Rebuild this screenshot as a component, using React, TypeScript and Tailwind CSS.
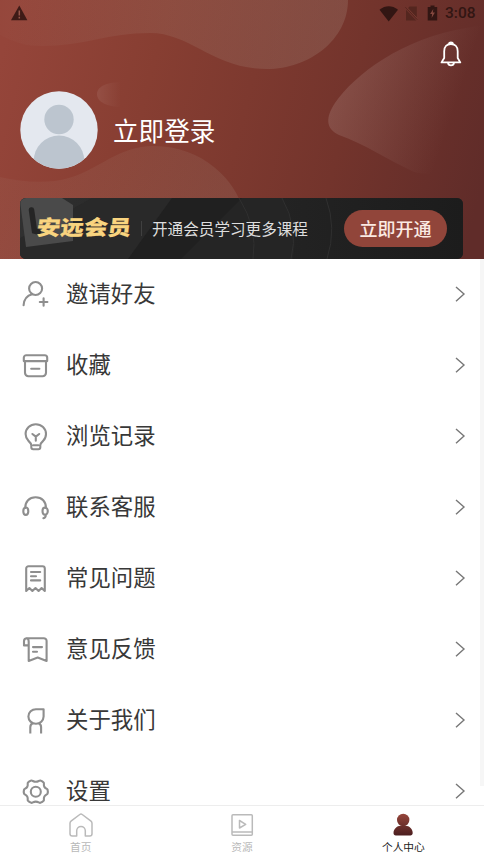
import React from 'react';

const Stroke: React.FC<{ children: React.ReactNode }> = ({ children }) => (
  <svg
    width="30"
    height="30"
    viewBox="0 0 30 30"
    fill="none"
    stroke="#8e8e8e"
    strokeWidth="2.1"
    strokeLinecap="round"
    strokeLinejoin="round"
    className="flex-shrink-0"
  >
    {children}
  </svg>
);

// Icons are drawn on a 30x30 grid
const menu = [
  {
    label: '邀请好友',
    icon: (
      <>
        <circle cx="15.6" cy="9.5" r="6.5" />
        <path d="M12.2 15.3C6.7 16.7 3.9 21 3.6 26.3M19.8 23h7.6M23.6 19.2v7.6" />
      </>
    ),
  },
  {
    label: '收藏',
    icon: (
      <>
        <path d="M6.3 5.2h18.4a2.5 2.5 0 0 1 2.5 2.5v3.4H3.8V7.7a2.5 2.5 0 0 1 2.5-2.5zM5 11.3v11.5a3.4 3.4 0 0 0 3.4 3.4h14.2a3.4 3.4 0 0 0 3.4-3.4V11.3M11.2 18.8h8.2" />
      </>
    ),
  },
  {
    label: '浏览记录',
    icon: (
      <>
        <path d="M11.3 24.3c0-1.8-1.2-2.9-2.9-4.5A9.9 9.9 0 0 1 5.6 13a10.2 9.8 0 0 1 20.4 0c0 2.7-1 5-2.8 6.8-1.7 1.6-2.9 2.7-2.9 4.5v2a2 2 0 0 1-2 2h-5a2 2 0 0 1-2-2zM13.2 24.3h5.2M12.4 13l3.4 2.6 3.4-2.6M15.8 15.6v4.2" />
      </>
    ),
  },
  {
    label: '联系客服',
    icon: (
      <>
        <path d="M5.2 16C5.2 9.6 9.2 5.3 15.6 5.3S26 9.6 26 16" />
        <ellipse cx="5.8" cy="19.2" rx="2.5" ry="3.7" />
        <path d="M25 15.6c-1.6 0-2.5 1.7-2.5 3.5s.9 3.7 2.5 3.7 2.8-1.7 2.8-3.7-1.2-3.5-2.8-3.5zM25.8 22.8c0 1.9-.8 3.1-2.4 3.5" />
      </>
    ),
  },
  {
    label: '常见问题',
    icon: (
      <>
        <path d="M6.2 28V5.5a2.3 2.3 0 0 1 2.3-2.3h14a2.3 2.3 0 0 1 2.3 2.3V28l-3.2-3-3 3-3.1-3-3.1 3-3-3zM11 9h9.2M11 13.2h5M11 17.4h9.2" />
      </>
    ),
  },
  {
    label: '意见反馈',
    icon: (
      <>
        <path d="M8.7 11.4H4V7.2a3 3 0 0 1 3-3h16.8a2.8 2.8 0 0 1 2.8 2.8v19.9l-8.9-3.4-9 3.4V7.8c0-2-.7-3.2-1.7-3.6M13 13.1h9M13 17.7h4" />
      </>
    ),
  },
  {
    label: '关于我们',
    icon: (
      <>
        <path d="M23.6 4.2v7.4a7.6 7.3 0 1 1-7.6-7.4zM10.3 28.4v-6.2c0-2 .9-3.3 2.3-4M21.1 28.4v-6.2c0-2-.9-3.3-2.3-4" strokeLinecap="butt" />
      </>
    ),
  },
  {
    label: '设置',
    icon: (
      <>
        <path d="M15.8 5.8c2.6 0 3.3-1.5 4.5-1.2s2.8 1.3 3.4 2.1c.7 1-.5 2 .7 4.2 1.2 2 2.9 1.7 3.2 3 .3 1.1.3 2.5 0 3.6-.3 1.3-2 1-3.2 3-1.2 2.2 0 3.2-.7 4.2-.6.8-2.2 1.8-3.4 2.1s-1.9-1.2-4.5-1.2-3.3 1.5-4.5 1.2-2.8-1.3-3.4-2.1c-.7-1 .5-2-.7-4.2-1.2-2-2.9-1.7-3.2-3-.3-1.1-.3-2.5 0-3.6.3-1.3 2-1 3.2-3 1.2-2.2 0-3.2.7-4.2.6-.8 2.2-1.8 3.4-2.1s1.9 1.2 4.5 1.2z" />
        <circle cx="15.8" cy="15.8" r="5" />
      </>
    ),
  },
];

const HeaderWaves = () => (
  <svg className="absolute inset-0 h-full w-full" viewBox="0 0 484 259" preserveAspectRatio="none">
    <defs>
      <linearGradient id="base" x1="0" y1="60" x2="484" y2="180" gradientUnits="userSpaceOnUse">
        <stop offset="0" stopColor="#95453a" />
        <stop offset=".3" stopColor="#873e32" />
        <stop offset=".7" stopColor="#73342c" />
        <stop offset="1" stopColor="#602c29" />
      </linearGradient>
      <linearGradient id="top" x1="0" y1="0" x2="340" y2="0" gradientUnits="userSpaceOnUse">
        <stop offset="0" stopColor="#b6a698" stopOpacity=".02" />
        <stop offset=".5" stopColor="#b6a698" stopOpacity=".14" />
        <stop offset="1" stopColor="#b6a698" stopOpacity=".2" />
      </linearGradient>
      <linearGradient id="hill" x1="60" y1="146" x2="180" y2="250" gradientUnits="userSpaceOnUse">
        <stop offset="0" stopColor="#b6a698" stopOpacity=".07" />
        <stop offset="1" stopColor="#b6a698" stopOpacity=".14" />
      </linearGradient>
      <linearGradient id="leaf" x1="340" y1="85" x2="450" y2="122" gradientUnits="userSpaceOnUse">
        <stop offset="0" stopColor="#c8b2ae" stopOpacity=".2" />
        <stop offset="1" stopColor="#c8b2ae" stopOpacity="0" />
      </linearGradient>
      <linearGradient id="drop" x1="97" y1="0" x2="121" y2="0" gradientUnits="userSpaceOnUse">
        <stop offset="0" stopColor="#fff" stopOpacity=".08" />
        <stop offset="1" stopColor="#fff" stopOpacity="0" />
      </linearGradient>
    </defs>
    <rect width="484" height="259" fill="url(#base)" />
    <path d="M0 35c16 8 26 11 42 11 42 0 66-13 108-13 41 0 63 36 117 36 42 0 81-29 81-69H0z" fill="url(#top)" />
    <path d="M0 177c18 4 35 6 55 4 39-5 59-35 99-35 49 0 82 35 89 64v49H0z" fill="url(#hill)" />
    <path d="M466 28C403 38 354 75 335 103c-10 15-9 26 4 32 26 9 49 25 75 37 40 10 70-20 70-60V25z" fill="url(#leaf)" />
    <path d="M122 82c-14 0-25 4-25 12s10 13 25 13z" fill="url(#drop)" />
  </svg>
);

const StatusBar = () => (
  <div className="relative flex h-7 items-center justify-between pl-[11px] pr-[9px] text-[#321613]">
    <svg width="17" height="16" viewBox="0 0 17 16" className="mt-[-2px]">
      <path d="M8.3.5 16.4 15.2H0z" fill="#3e1b17" />
      <path d="M8.3 5.5v5M8.3 11.7v1.7" stroke="#95564b" strokeWidth="1.5" />
    </svg>
    <div className="flex items-center">
      <svg width="20" height="16" viewBox="0 0 20 16" className="mt-[-1px]">
        <path d="M.5 3.8C6.5-.8 13-.8 19 3.8L9.7 15.5z" fill="currentColor" />
      </svg>
      <svg width="13" height="15" viewBox="0 0 13 15" className="ml-[6px] mt-[-1px]">
        <path d="M4.6.5h7.2v11.2L2.9 2.3zM1 3.8 11.2 14.5H1z" fill="#54261f" />
        <path d="M.4 1.1 12.2 13.6" stroke="#54261f" strokeWidth="1" />
        <path d="M1.8 1.4 12.6 12.7" stroke="#74392f" strokeWidth="1" />
      </svg>
      <svg width="11" height="16" viewBox="0 0 11 16" className="ml-[9px] mt-[-2px]">
        <path d="M3.5.5h4V2h2.7v13.5H.7V2h2.8z" fill="currentColor" />
        <path d="m6.3 4-3.2 5h2l-.5 4 3.3-5.4H5.8z" fill="#85483f" />
      </svg>
      <span className="ml-[7px] w-[30px] whitespace-nowrap font-[Roboto] text-[15.5px] font-medium leading-none">3:08</span>
    </div>
  </div>
);

const VipBanner = () => (
  <div className="relative mx-[20px] mt-[29px] flex h-[61px] w-[443px] items-center overflow-hidden rounded-[6px] bg-[#242424]">
    <svg className="absolute inset-0" width="443" height="61" viewBox="0 0 443 61">
      <defs>
        <linearGradient id="dark" x1="0" x2="1">
          <stop offset="0" stopColor="#303030" />
          <stop offset=".4" stopColor="#262626" />
          <stop offset="1" stopColor="#1c1c1c" />
        </linearGradient>
      </defs>
      <rect width="443" height="61" fill="url(#dark)" />
      <path d="M72 0h80l-44 61H0V40z" fill="#292929" />
      <path d="M152 0h110l-61 61H108z" fill="#202020" />
      <path d="M262 0h-40l-61 61h112c4-20 0-40-11-61z" fill="#252525" />
      <path d="M0 3 4 0h38l11 7v36L6 49z" fill="#4a4a4a" />
      <path d="M11.5 12l3 21 4 1" fill="none" stroke="#252525" strokeWidth="5.5" strokeLinecap="round" />
      <path d="M219 0q19 30 14 61M262 0q17 30 9 61M306 0q11 30 1 61" fill="none" stroke="#303030" />
    </svg>
    <span className="relative ml-[17px] mt-[-5px] w-[95px] origin-center -skew-x-6 scale-y-[.88] whitespace-nowrap text-[23.6px] font-black leading-[30px] text-[#f9d47f] [-webkit-text-stroke:0.2px_#f9d47f]">
      安远会员
    </span>
    <span className="relative ml-[9px] h-[15px] w-px bg-[#404040]" />
    <span className="relative ml-[10px] w-[157px] whitespace-nowrap text-[15.6px] text-[#dedede]">开通会员学习更多课程</span>
    <button className="relative ml-[35px] h-[37px] w-[103px] rounded-full bg-[#91453a] pb-px text-[18px] font-medium text-[#fbeae3]">
      立即开通
    </button>
  </div>
);

const App: React.FC = () => {
  return (
    <div className="flex h-[860px] w-[484px] flex-col overflow-hidden bg-white font-['Noto_Sans_CJK_SC',sans-serif]">
      {/* Header */}
      <header className="relative h-[259px] flex-shrink-0 overflow-hidden">
        <HeaderWaves />
        <StatusBar />
        <div className="relative flex h-[63px] justify-end pr-[22px] pt-[13px]">
          <svg width="22" height="27" viewBox="0 0 22 27" fill="none" stroke="#fff" strokeWidth="1.8" strokeLinejoin="round">
            <path d="M4.2 17V10.2C4.2 5.8 7 3 10.9 3s6.8 2.8 6.8 7.2V17l2.6 4.4H1.5zM9 2.9c0-2 3.8-2 3.8 0M8 21.8c.5 3.3 5.5 3.3 6 0" />
          </svg>
        </div>
        <div className="relative flex h-[78px] items-center pl-5">
          <svg width="78" height="78" viewBox="0 0 78 78">
            <clipPath id="avatar"><circle cx="39" cy="39" r="38.7" /></clipPath>
            <g clipPath="url(#avatar)">
              <rect width="78" height="78" fill="#e4e8ef" />
              <circle cx="39" cy="28.5" r="14.7" fill="#bcc5cf" />
              <ellipse cx="39" cy="70" rx="25.3" ry="25.5" fill="#bcc5cf" />
            </g>
          </svg>
          <span className="ml-[15px] text-[25.6px] leading-none text-white">立即登录</span>
        </div>
        <VipBanner />
      </header>

      {/* Menu */}
      <main className="flex min-h-0 flex-1 overflow-hidden">
        <ul className="-mt-px flex-1">
          {menu.map((item) => (
            <li key={item.label} className="flex h-[71px] items-center pl-5 pr-[14px]">
              <Stroke>{item.icon}</Stroke>
              <span className="mb-[3px] ml-4 flex-1 text-[22.4px] leading-none text-[#383838]">{item.label}</span>
              <svg width="12" height="18" viewBox="0 0 12 18" fill="none" stroke="#777" strokeWidth="1.4">
                <path d="m2 2 8 7-8 7.2" />
              </svg>
            </li>
          ))}
        </ul>
        <div className="h-[527px] w-1 bg-[#f6f6f6]" />
      </main>

      {/* Tab bar */}
      <nav className="grid h-[55px] flex-shrink-0 grid-cols-3 border-t border-[#ededed] bg-white text-[10.7px] leading-none text-[#b8b8b8]">
        <div className="flex flex-col items-center pt-[6px]">
          <svg width="26" height="26" viewBox="0 0 26 26" fill="none" stroke="#bababa" strokeWidth="1.5" strokeLinejoin="round">
            <path d="M2 11.3Q2 10 3 9.2L11.8 2.5q1.2-.9 2.4 0L23 9.2q1 .8 1 2.1v10.4q0 2.3-2.3 2.3h-4.4v-5.3a4.3 4.3 0 0 0-8.6 0V24H4.3Q2 24 2 21.7z" />
          </svg>
          <span className="mt-[4px]">首页</span>
        </div>
        <div className="flex flex-col items-center pt-[6px]">
          <svg width="26" height="26" viewBox="0 0 26 26" fill="none" stroke="#bababa" strokeWidth="1.5" strokeLinejoin="round">
            <rect x="3" y="2.7" width="20.3" height="20.6" rx="1" />
            <path d="M3 19.9h20.3M10.5 8.5V16l6.2-3.7z" />
          </svg>
          <span className="mt-[4px]">资源</span>
        </div>
        <div className="flex flex-col items-center pt-[6px] text-[#222]">
          <svg width="26" height="26" viewBox="0 0 26 26">
            <defs>
              <linearGradient id="person" x1="0" y1="2" x2="0" y2="23" gradientUnits="userSpaceOnUse">
                <stop stopColor="#95453a" />
                <stop offset="1" stopColor="#4d1f20" />
              </linearGradient>
            </defs>
            <circle cx="13.2" cy="8" r="6.2" fill="url(#person)" />
            <path d="M3.5 21c0-4 3.5-7.3 7-7.3h5c4 0 7.2 3.3 7.2 7.3 0 1.5-1 2.4-2.3 2.4H5.8c-1.4 0-2.3-.9-2.3-2.4z" fill="url(#person)" />
          </svg>
          <span className="mt-[4px]">个人中心</span>
        </div>
      </nav>
    </div>
  );
};

export default App;
